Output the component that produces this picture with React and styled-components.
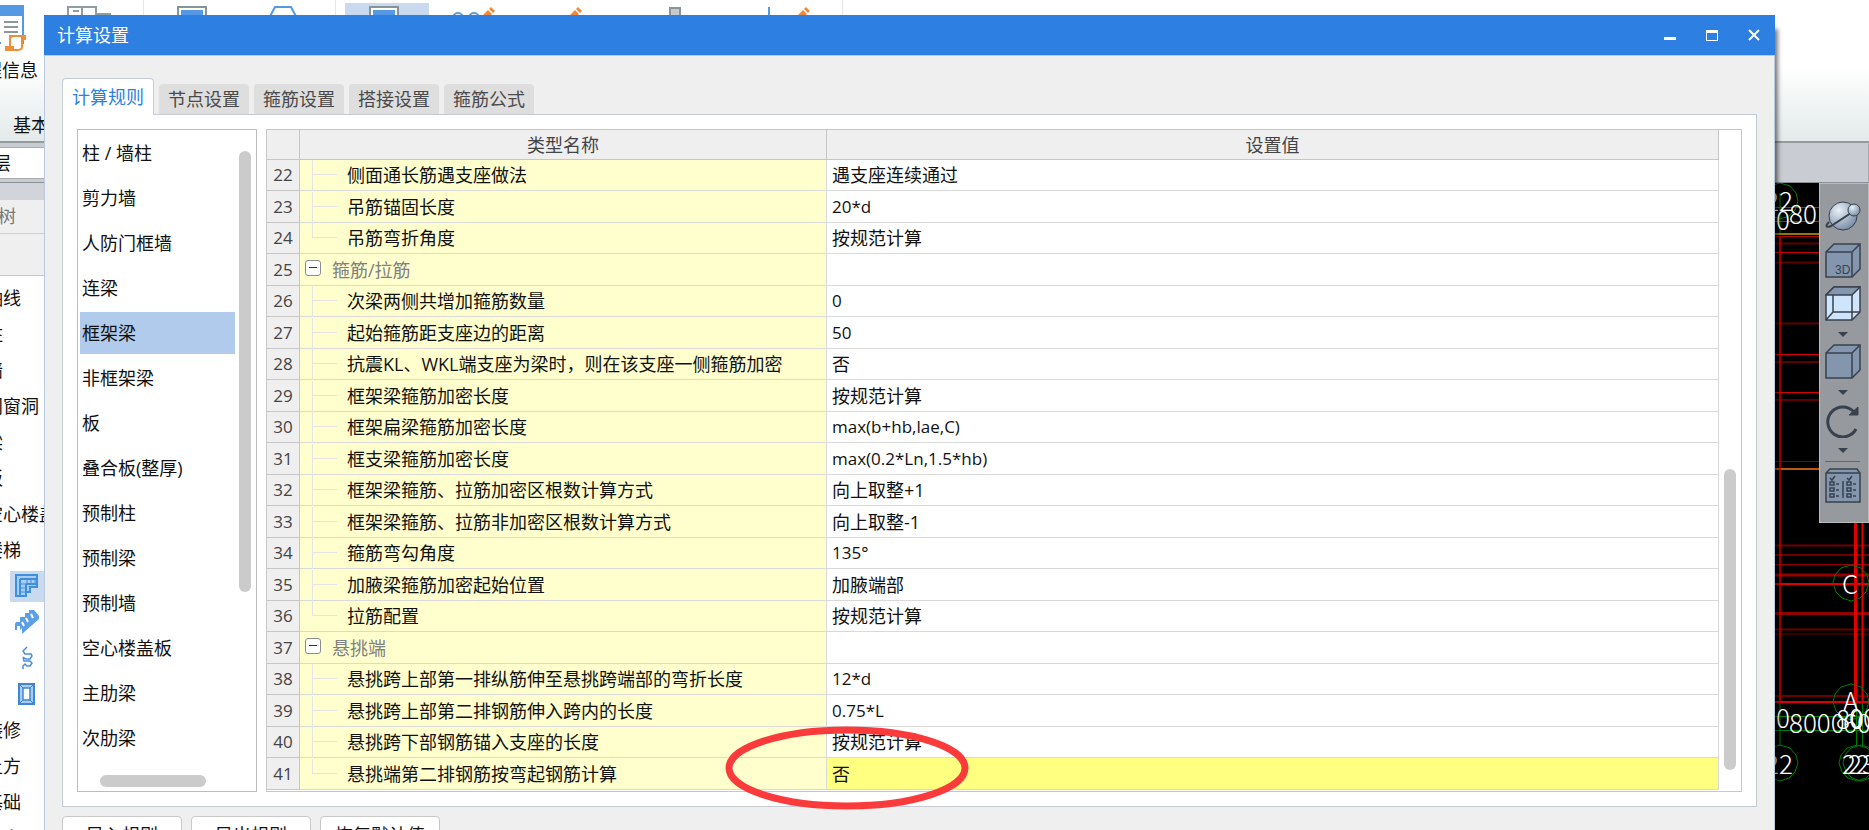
import React from 'react';
import styled, { createGlobalStyle, css } from 'styled-components';

const Global = createGlobalStyle`
  * { box-sizing: border-box; }
  body { margin: 0; overflow: hidden; }
  body, button, input {
    font-family: "Open Sans", "Noto Sans CJK SC", sans-serif;
    font-size: 18px;
    line-height: 24px;
    color: #111;
  }
`;

/* ---------- application behind the dialog ---------- */

const Desktop = styled.div`
  position: relative;
  display: flex;
  flex-direction: column;
  height: 100vh;
  overflow: hidden;
  background: #fff;
`;

const Ribbon = styled.header`
  display: flex;
  flex: none;
  height: 141px;
  background: linear-gradient(#fff 66px, #e3eaea);
`;

const RibbonGroup = styled.div`
  position: relative;
  display: flex;
  flex: none;
  gap: ${(p) => p.$gap || 0}px;
  width: ${(p) => p.$width}px;
  padding: 3px 0 0 ${(p) => p.$inset || 0}px;
  border-right: 1px solid #e4e6e8;
`;

const RibbonButton = styled.button`
  display: flex;
  flex: none;
  flex-direction: column;
  width: ${(p) => p.$width}px;
  height: 80px;
  padding: 0;
  border: 0;
  background: ${(p) => (p.$active ? '#c9d9f0' : 'transparent')};
  white-space: nowrap;
  svg { display: block; overflow: visible; }
`;

const ProjectButton = styled(RibbonButton)`
  margin-left: -34px;
  gap: 7px;
  svg {
    align-self: flex-end;
    margin-right: 12px;
  }
`;

const GroupCaption = styled.span`
  position: absolute;
  left: 13px;
  top: 113px;
  white-space: nowrap;
`;

const FloorBar = styled.div`
  display: flex;
  flex: none;
  height: 42px;
  padding: 4px 0 3px;
  background: #c9ccd2;
  border-top: 2px solid #969b9c;
  border-bottom: 1px solid #8b9096;
  border-right: 1px solid #a5a8ac;
`;

const FloorInput = styled.input`
  width: 160px;
  margin-left: -30px;
  padding: 0 5px;
  border: 1px solid #a9adb1;
  border-left: 0;
  outline: 0;
`;

const Workspace = styled.div`
  display: flex;
  flex: 1;
  min-height: 0;
`;

const NavPane = styled.nav`
  flex: none;
  width: 240px;
  background: #fff;
`;

const NavStrip = styled.div`
  height: 17px;
  background: #d2d4db;
`;

const NavTitle = styled.h2`
  height: 34px;
  margin: 0;
  padding: 4px 0;
  text-indent: -38px;
  font-size: 18px;
  font-weight: 400;
  color: #777;
  background: #efefef;
  border-bottom: 1px solid #cfcfcf;
`;

const NavTools = styled.div`
  height: 42px;
  margin-bottom: 4px;
  background: #efefef;
  border-bottom: 1px solid #c4c8cc;
`;

const NavList = styled.ul`
  margin: 0;
  padding: 0;
  list-style: none;
`;

const NavItem = styled.li`
  display: flex;
  align-items: center;
  height: 36px;
  padding-left: ${(p) => (p.$icon ? 10 : 0)}px;
  margin-left: ${(p) => (p.$icon ? 0 : -15)}px;
`;

const NavIcon = styled.span`
  display: flex;
  align-items: center;
  width: 120px;
  height: 31px;
  padding-left: 3px;
  background: ${(p) => (p.$active ? '#c9d9f0' : 'transparent')};
`;

const Canvas = styled.main`
  position: relative;
  display: flex;
  flex: 1;
  justify-content: flex-end;
  align-items: flex-start;
  background: #000;
`;

const Drawing = styled.svg`
  flex: none;
  text {
    font-family: "Noto Sans CJK SC", sans-serif;
    font-weight: 300;
    fill: #fff;
  }
`;

const ViewTools = styled.div`
  position: absolute;
  top: 0;
  right: 0;
  display: flex;
  flex-direction: column;
  align-items: center;
  width: 50px;
  height: 340px;
  padding: 16px 3px 0 0;
  background: #96999d;
  border: 1px solid #b9bbbe;
`;

const ToolButton = styled.button`
  display: flex;
  justify-content: center;
  flex: none;
  width: 40px;
  height: ${(p) => p.$height}px;
  padding: 0;
  border: 0;
  background: none;
  svg { display: block; }
`;

const ToolRule = styled.hr`
  flex: none;
  width: 35px;
  height: 1px;
  margin: 3px 0 6px;
  border: 0;
  background: #6a6664;
`;

/* ---------- dialog ---------- */

const Dialog = styled.section`
  position: absolute;
  top: 15px;
  left: 44px;
  right: 94px;
  background: #efefef;
  box-shadow: 5px 12px 4px -2px rgba(0, 0, 0, 0.5);
`;

const TitleBar = styled.div`
  display: flex;
  align-items: center;
  justify-content: space-between;
  height: 40px;
  padding: 0 15px 0 13px;
  background: #2d7fe2;
`;

const Title = styled.h1`
  margin: 0;
  font-size: 18px;
  font-weight: 400;
  color: #fff;
`;

const WindowButtons = styled.div`
  display: flex;
  gap: 30px;
`;

const WindowButton = styled.button`
  width: 12px;
  height: 12px;
  padding: 0;
  border: 0;
  background: none;
  svg { display: block; }
`;

const Body = styled.div`
  padding: 22px 17px 40px;
  border: 1px solid #b9cade;
`;

const Tabs = styled.div`
  display: flex;
  align-items: flex-end;
  gap: 5px;
  height: 36px;
`;

const Tab = styled.button`
  flex: none;
  width: 90px;
  height: 30px;
  padding: 0;
  border: 0;
  border-radius: 4px 4px 0 0;
  color: #4a4a4a;
  background: #dedede;
  ${(p) =>
    p.$active &&
    css`
      position: relative;
      width: 92px;
      height: 37px;
      margin-bottom: -1px;
      border: 1px solid #c5cbd2;
      border-bottom: 0;
      color: #2d7fe2;
      background: #fff;
    `}
`;

const Panel = styled.div`
  display: flex;
  gap: 9px;
  height: 693px;
  padding: 14px;
  background: #fff;
  border: 1px solid #c5cbd2;
`;

const Categories = styled.div`
  position: relative;
  flex: none;
  width: 180px;
  padding: 2px;
  border: 1px solid #bcbcbc;
`;

const CategoryList = styled.ul`
  display: flex;
  flex-direction: column;
  gap: 3px;
  margin: 0;
  padding: 0;
  list-style: none;
`;

const Category = styled.li`
  width: 155px;
  height: 42px;
`;

const CategoryButton = styled.button`
  width: 100%;
  height: 100%;
  padding: 0 2px;
  border: 0;
  text-align: left;
  background: ${(p) => (p.$active ? '#b1cbed' : 'transparent')};
`;

const Thumb = styled.div`
  position: absolute;
  border-radius: 6px;
  background: #cbcbcb;
`;

const CategoryThumbY = styled(Thumb)`
  top: 21px;
  right: 5px;
  width: 12px;
  height: 441px;
`;

const CategoryThumbX = styled(Thumb)`
  bottom: 4px;
  left: 22px;
  width: 106px;
  height: 12px;
`;

const GridFrame = styled.div`
  position: relative;
  flex: 1;
  min-width: 0;
  padding-right: 22px;
  border: 1px solid #c6c6c6;
`;

const GridThumb = styled(Thumb)`
  top: 339px;
  right: 5px;
  width: 12px;
  height: 301px;
`;

const Grid = styled.table`
  width: 100%;
  table-layout: fixed;
  border-collapse: separate;
  border-spacing: 0;
`;

const HeadRow = styled.tr`
  height: 30px;
`;

const HeadCell = styled.th`
  width: ${(p) => (p.$width ? `${p.$width}px` : 'auto')};
  padding: 0;
  font-weight: 400;
  color: #444;
  background: #efefef;
  border-right: 1px solid #c6c6c6;
  border-bottom: 1px solid #c6c6c6;
`;

const Row = styled.tr`
  height: 31px;
  &:nth-child(even) { height: 32px; }
`;

const NumberCell = styled.th`
  padding: 0;
  font-size: 17px;
  font-weight: 400;
  color: #444;
  background: #efefef;
  border-right: 1px solid #c6c6c6;
  border-bottom: 1px solid #c6c6c6;
`;

const NameCell = styled.td`
  height: inherit;
  padding: 0;
  background: #ffffce;
  border-right: 1px solid #d9d9d9;
  border-bottom: 1px solid #d9d9d9;
`;

const NameLine = styled.div`
  display: flex;
  align-items: center;
  height: 30px;
  gap: ${(p) => (p.$group ? 11 : 10)}px;
  padding-left: ${(p) => (p.$group ? 5 : 12)}px;
  color: ${(p) => (p.$group ? '#808080' : '#111')};
  white-space: nowrap;
`;

const Branch = styled.span`
  flex: none;
  align-self: stretch;
  width: 25px;
  margin-bottom: ${(p) => (p.$last ? 0 : -1)}px;
  background:
    linear-gradient(#e4e4e4, #e4e4e4) 0 14px / 25px 1px no-repeat,
    linear-gradient(#e4e4e4, #e4e4e4) 0 0 / 1px ${(p) => (p.$last ? '14px' : '100%')} no-repeat;
`;

const Expander = styled.button`
  display: flex;
  align-items: center;
  justify-content: center;
  flex: none;
  width: 16px;
  height: 16px;
  margin-bottom: 4px;
  padding: 0;
  border: 1px solid #8c8c8c;
  border-radius: 3px;
  background: #fff;
  &::before {
    content: "";
    width: 8px;
    height: 1px;
    background: #333;
  }
`;

const ValueCell = styled.td`
  padding: 0 5px;
  font-size: ${(p) => (p.$latin ? 17 : 18)}px;
  background: ${(p) => (p.$active ? '#ffff80' : '#fff')};
  border-right: 1px solid #d9d9d9;
  border-bottom: 1px solid #d9d9d9;
`;

const Actions = styled.footer`
  display: flex;
  gap: 9px;
  padding-top: 9px;
`;

const ActionButton = styled.button`
  width: 120px;
  height: 38px;
  padding: 0;
  border: 1px solid #c9c9c9;
  border-radius: 4px;
  background: #fff;
`;

const Marker = styled.svg`
  position: absolute;
  left: 725px;
  top: 725px;
  pointer-events: none;
`;

/* ---------- icons ---------- */

const ProjectIcon = () => (
  <svg width="47" height="48" viewBox="0 0 47 48" fill="none">
    <path d="M0 3H44V40H0Z" fill="#fff" stroke="#5598e4" strokeWidth="2" />
    <path d="M0 3H45V13H0Z" fill="#5598e4" />
    <path d="M25 19H39M25 24H39M25 29H39M25 34H29" stroke="#8c979b" strokeWidth="2" />
    <path d="M22 39V31H42V46H22Z" fill="#fff" />
    <path d="M30 33h13c3 0 3 4 0 4v7c0 2-2 3-5 3H27v-3h4V36c0-2 1-3 3-3" fill="#fff" stroke="#ec8f38" strokeWidth="2" />
    <path d="M26 43h9v5h-9ZM42 32h5v5h-5Z" fill="#ec8f38" />
  </svg>
);
const SheetIcon = () => (
  <svg width="44" height="40" viewBox="0 0 44 40" fill="none" stroke="#8e9da0" strokeWidth="2">
    <path d="M1 40V4H29V40M29 11H43V40M6 8H12M15 4V40" />
  </svg>
);
const Monitor = () => (
  <g>
    <rect x="1" y="4" width="28" height="25" fill="#fff" stroke="#84959a" strokeWidth="2" />
    <rect x="4" y="7" width="22" height="19" fill="#5598e4" />
  </g>
);
const MonitorIcon = () => (
  <svg width="30" height="30" viewBox="0 0 30 30"><Monitor /></svg>
);
const SettingsIcon = () => (
  <svg width="84" height="30" viewBox="-24 0 84 30"><Monitor /></svg>
);
const HexIcon = () => (
  <svg width="32" height="32" viewBox="0 0 32 32" fill="none" stroke="#5598e4" strokeWidth="2">
    <path d="M8 4H24L31 17L24 30H8L1 17Z" />
  </svg>
);
const Pencil = ({ x }) => (
  <path d={`M${x} 14l7-7 4 4-7 7ZM${x + 8} 6l2-2 4 4-2 2Z`} fill="#f0883a" />
);
const EyesIcon = () => (
  <svg width="84" height="30" viewBox="0 0 84 30">
    <g fill="none" stroke="#5598e4" strokeWidth="2">
      <circle cx="19" cy="15" r="5" />
      <circle cx="35" cy="15" r="5" />
    </g>
    <Pencil x={42} />
  </svg>
);
const EditIcon = () => (
  <svg width="84" height="30" viewBox="0 0 84 30"><Pencil x={35} /></svg>
);
const ColumnIcon = () => (
  <svg width="84" height="30" viewBox="0 0 84 30">
    <rect x="43" y="5" width="10" height="24" fill="#c5cacc" stroke="#87969b" strokeWidth="2" />
  </svg>
);
const AxisIcon = () => (
  <svg width="84" height="30" viewBox="0 0 84 30">
    <path d="M48 4V30" stroke="#5598e4" strokeWidth="2" />
    <Pencil x={75} />
  </svg>
);

const StraightStairIcon = () => (
  <svg width="26" height="24" viewBox="0 0 26 24" fill="none" stroke="#3f8fdf" strokeWidth="2">
    <path d="M3 1H24V13H17V18H13V22H3Z" fill="#a9cdf4" />
    <path d="M7 5V22M7 5H24M13 10V18M13 10H24" />
    <path d="M14 5V10M18 5V10M22 5V10M7 10H13M7 14H13M7 18H13" strokeWidth="1" />
  </svg>
);
const StairIcon = () => (
  <svg width="26" height="26" viewBox="0 0 26 26">
    <path d="M2 15l1-2h4v-5h5V4h4V1h5l5 6v3L9 25v-6l-2 2v-4H4v4H2Z" fill="#5a9fe8" />
    <path d="M9 13l2 4M13 9l2 4M18 5l2 4" stroke="#fff" strokeWidth="2" />
  </svg>
);
const SpiralIcon = () => (
  <svg width="26" height="26" viewBox="0 0 26 26" fill="none" stroke="#4a8fdc" strokeWidth="1.5">
    <path d="M14 2l-4 4 2 3h6l1 2-2 3h-4l-3-2M10 12l1 4h6l2 2-2 3h-3l-2-2-2 2v3" />
  </svg>
);
const WellIcon = () => (
  <svg width="26" height="24" viewBox="0 0 26 24" fill="none" stroke="#3f86d8">
    <rect x="6" y="2" width="15" height="20" fill="#a9cdf4" strokeWidth="2" />
    <rect x="10" y="6" width="7" height="12" fill="#fff" strokeWidth="1.5" />
    <path d="M6 2l4 4M21 2l-4 4M6 22l4-4M21 22l-4-4" />
  </svg>
);

const OrbitIcon = () => (
  <svg width="36" height="32" viewBox="0 0 36 32">
    <defs>
      <radialGradient id="ball" cx="0.35" cy="0.3" r="0.8">
        <stop offset="0" stopColor="#e8f1fa" />
        <stop offset="1" stopColor="#71849c" />
      </radialGradient>
    </defs>
    <g stroke="#38414e" fill="url(#ball)">
      <circle cx="18" cy="16" r="14" />
      <path d="M4 22c-4 4-3 6 2 4L26 13" fill="none" strokeWidth="2" />
      <circle cx="29" cy="10" r="6" />
    </g>
  </svg>
);
const CubeIcon = ({ label }) => (
  <svg width="36" height="35" viewBox="0 0 36 35" fill="#8496ad" stroke="#38414e" strokeWidth="1.5">
    <path d="M1 9L9 1H35V26L27 34H1Z" />
    <path d="M1 9H27V34M27 9L35 1" fill="none" />
    {label && (
      <text x="10" y="31" fontFamily="Liberation Sans" fontSize="12" fill="#38414e" stroke="none">{label}</text>
    )}
  </svg>
);
const WireCubeIcon = () => (
  <svg width="36" height="35" viewBox="0 0 36 35" stroke="#38414e" strokeWidth="1.5">
    <path d="M1 9L9 1H35V26L27 34H1Z" fill="#cfe5fc" />
    <path d="M1 9L9 1H35L27 9Z" fill="#8496ad" />
    <path d="M27 9V34M8 9V26H35M8 26L1 34" fill="none" />
  </svg>
);
const CaretIcon = () => (
  <svg width="10" height="5" viewBox="0 0 10 5"><path d="M0 0H10L5 5Z" fill="#38414e" /></svg>
);
const RotateIcon = () => (
  <svg width="36" height="34" viewBox="0 0 36 34" fill="none" stroke="#38414e" strokeWidth="3">
    <path d="M31 25A15 15 0 1 1 29 8" />
    <path d="M33 3V11H24Z" fill="#38414e" strokeWidth="1" />
  </svg>
);
const ChecklistIcon = () => (
  <svg width="36" height="35" viewBox="0 0 36 35" fill="#8496ad" stroke="#38414e" strokeWidth="1.5">
    <path d="M1 5L5 1H32L35 5V34H1Z" />
    <path d="M1 5H35M5 10l2 2 3-4M22 10l2 2 3-4M5 14h4v3h-4ZM5 20h4v3h-4ZM5 26h4v3h-4ZM22 14h4v3h-4ZM22 20h4v3h-4ZM22 26h4v3h-4ZM11 16h3M11 22h3M11 28h3M28 16h3M28 22h3M28 28h3M18 13V30" fill="none" />
  </svg>
);

const HLine = ({ y, c, w = 1 }) => <path d={`M0 ${y}H94`} stroke={c} strokeWidth={w} />;
const Bubble = ({ x, y }) => (
  <polygon
    points="0,-18 10,-15 16,-8 18,0 15,9 9,15 0,18 -9,15 -15,9 -18,0 -16,-8 -10,-15"
    transform={`translate(${x} ${y})`}
    fill="none"
    stroke="#007c00"
  />
);

const PlanDrawing = () => (
  <Drawing width="94" height="647" viewBox="0 0 94 647" fontSize="26">
    <path d="M5 10V52M0 38.500H94" stroke="#007c00" />
    <HLine y={24.5} c="#007c00" />
    <HLine y={51} c="#8a7a10" w={2} />
    <HLine y={53.5} c="#b00000" />
    <HLine y={60.5} c="#5c0000" w={2} />
    <HLine y={69.5} c="#c80000" />
    <HLine y={79.5} c="#5c0000" w={2} />
    <HLine y={140.5} c="#5c0000" w={2} />
    <HLine y={171.5} c="#d80000" />
    <HLine y={179} c="#5c0000" w={2} />
    <HLine y={209.5} c="#d80000" />
    <HLine y={217} c="#5c0000" w={2} />
    <HLine y={278.5} c="#800000" />
    <HLine y={286} c="#b85a10" w={2} />
    <HLine y={362.5} c="#700000" w={2} />
    <HLine y={372} c="#700000" w={2} />
    <HLine y={381.5} c="#980000" />
    <HLine y={392} c="#980000" w={3} />
    <HLine y={401} c="#e00000" w={2} />
    <HLine y={430.5} c="#900000" w={3} />
    <HLine y={446.5} c="#6a0000" w={2} />
    <HLine y={451} c="#6a0000" />
    <HLine y={513} c="#6a0000" w={2} />
    <HLine y={519} c="#e00000" w={2} />
    <path d="M5 53V520" stroke="#d80000" strokeWidth="1.5" />
    <path d="M80.500 340V520" stroke="#e00000" strokeWidth="3" />
    <path d="M87.500 340V520" stroke="#e00000" strokeWidth="2" />
    <path d="M5 520V563M0 533.500H94M0 547.500H94M81.500 520V563M87.500 520V563" stroke="#007c00" />
    <Bubble x={5} y={18} />
    <Bubble x={76} y={400} />
    <Bubble x={76} y={519} />
    <Bubble x={5} y={580} />
    <Bubble x={82} y={580} />
    <Bubble x={86} y={580} />
    <text x="-10" y="28">22</text>
    <text x="1" y="47">0</text>
    <text x="14" y="41">80</text>
    <text x="67" y="411">C</text>
    <text x="68" y="528">A</text>
    <text x="1" y="545">0</text>
    <text x="14" y="550">8000</text>
    <text x="61" y="546">80</text>
    <text x="68" y="550">60</text>
    <text x="74" y="545">00</text>
    <text x="-10" y="591">22</text>
    <text x="67" y="591">22</text>
    <text x="73" y="591">23</text>
  </Drawing>
);

/* ---------- data ---------- */

const tabs = ['计算规则', '节点设置', '箍筋设置', '搭接设置', '箍筋公式'];

const categories = [
  '柱 / 墙柱', '剪力墙', '人防门框墙', '连梁', '框架梁', '非框架梁', '板',
  '叠合板(整厚)', '预制柱', '预制梁', '预制墙', '空心楼盖板', '主肋梁', '次肋梁',
];

const rows = [
  { n: 22, name: '侧面通长筋遇支座做法', value: '遇支座连续通过' },
  { n: 23, name: '吊筋锚固长度', value: '20*d', latin: true },
  { n: 24, name: '吊筋弯折角度', value: '按规范计算', last: true },
  { n: 25, name: '箍筋/拉筋', value: '', group: true },
  { n: 26, name: '次梁两侧共增加箍筋数量', value: '0', latin: true },
  { n: 27, name: '起始箍筋距支座边的距离', value: '50', latin: true },
  { n: 28, name: '抗震KL、WKL端支座为梁时，则在该支座一侧箍筋加密', value: '否' },
  { n: 29, name: '框架梁箍筋加密长度', value: '按规范计算' },
  { n: 30, name: '框架扁梁箍筋加密长度', value: 'max(b+hb,lae,C)', latin: true },
  { n: 31, name: '框支梁箍筋加密长度', value: 'max(0.2*Ln,1.5*hb)', latin: true },
  { n: 32, name: '框架梁箍筋、拉筋加密区根数计算方式', value: '向上取整+1' },
  { n: 33, name: '框架梁箍筋、拉筋非加密区根数计算方式', value: '向上取整-1' },
  { n: 34, name: '箍筋弯勾角度', value: '135°', latin: true },
  { n: 35, name: '加腋梁箍筋加密起始位置', value: '加腋端部' },
  { n: 36, name: '拉筋配置', value: '按规范计算', last: true },
  { n: 37, name: '悬挑端', value: '', group: true },
  { n: 38, name: '悬挑跨上部第一排纵筋伸至悬挑跨端部的弯折长度', value: '12*d', latin: true },
  { n: 39, name: '悬挑跨上部第二排钢筋伸入跨内的长度', value: '0.75*L', latin: true },
  { n: 40, name: '悬挑跨下部钢筋锚入支座的长度', value: '按规范计算' },
  { n: 41, name: '悬挑端第二排钢筋按弯起钢筋计算', value: '否', last: true, active: true },
];

const navItems = [
  { text: '轴线' }, { text: '柱' }, { text: '墙' }, { text: '门窗洞' }, { text: '梁' },
  { text: '板' }, { text: '空心楼盖' }, { text: '楼梯' },
  { label: '直形梯段', icon: StraightStairIcon, active: true },
  { label: '楼梯', icon: StairIcon },
  { label: '螺旋梯段', icon: SpiralIcon },
  { label: '楼梯井', icon: WellIcon },
  { text: '装修' }, { text: '土方' }, { text: '基础' }, { text: '其它' },
];

/* ---------- page ---------- */

function AppBackground() {
  return (
    <>
      <Ribbon>
        <RibbonGroup $width={144} $gap={29}>
          <ProjectButton $width={72}><ProjectIcon />工程信息</ProjectButton>
          <RibbonButton $width={44} aria-label="图纸"><SheetIcon /></RibbonButton>
          <GroupCaption>基本设置</GroupCaption>
        </RibbonGroup>
        <RibbonGroup $width={192} $gap={60} $inset={33}>
          <RibbonButton $width={30} aria-label="查看"><MonitorIcon /></RibbonButton>
          <RibbonButton $width={32} aria-label="比重"><HexIcon /></RibbonButton>
        </RibbonGroup>
        <RibbonGroup $width={507} $gap={10} $inset={9}>
          <RibbonButton $width={84} $active aria-label="计算设置"><SettingsIcon /></RibbonButton>
          <RibbonButton $width={84} aria-label="查看编辑"><EyesIcon /></RibbonButton>
          <RibbonButton $width={84} aria-label="编辑"><EditIcon /></RibbonButton>
          <RibbonButton $width={84} aria-label="构件"><ColumnIcon /></RibbonButton>
          <RibbonButton $width={84} aria-label="轴网"><AxisIcon /></RibbonButton>
        </RibbonGroup>
      </Ribbon>
      <FloorBar>
        <FloorInput aria-label="楼层" defaultValue="首层" />
      </FloorBar>
      <Workspace>
        <NavPane>
          <NavStrip />
          <NavTitle>导航树</NavTitle>
          <NavTools />
          <NavList>
            {navItems.map((item, i) => (
              <NavItem key={i} $icon={!!item.icon}>
                {item.icon ? (
                  <NavIcon $active={item.active} role="img" aria-label={item.label}><item.icon /></NavIcon>
                ) : (
                  item.text
                )}
              </NavItem>
            ))}
          </NavList>
        </NavPane>
        <Canvas>
          <PlanDrawing />
          <ViewTools>
            <ToolButton $height={43} aria-label="动态观察"><OrbitIcon /></ToolButton>
            <ToolButton $height={43} aria-label="三维"><CubeIcon label="3D" /></ToolButton>
            <ToolButton $height={46} aria-label="线框"><WireCubeIcon /></ToolButton>
            <ToolButton $height={12} aria-label="线框选项"><CaretIcon /></ToolButton>
            <ToolButton $height={46} aria-label="实体"><CubeIcon /></ToolButton>
            <ToolButton $height={14} aria-label="实体选项"><CaretIcon /></ToolButton>
            <ToolButton $height={44} aria-label="旋转"><RotateIcon /></ToolButton>
            <ToolButton $height={10} aria-label="旋转选项"><CaretIcon /></ToolButton>
            <ToolRule />
            <ToolButton $height={36} aria-label="显示设置"><ChecklistIcon /></ToolButton>
          </ViewTools>
        </Canvas>
      </Workspace>
    </>
  );
}

function SettingsGrid() {
  return (
    <GridFrame>
      <Grid>
        <thead>
          <HeadRow>
            <HeadCell $width={33} aria-label="序号" />
            <HeadCell $width={527}>类型名称</HeadCell>
            <HeadCell>设置值</HeadCell>
          </HeadRow>
        </thead>
        <tbody>
          {rows.map((r) => (
            <Row key={r.n}>
              <NumberCell scope="row">{r.n}</NumberCell>
              <NameCell>
                <NameLine $group={r.group}>
                  {r.group ? <Expander aria-label="折叠" /> : <Branch $last={r.last} />}
                  {r.name}
                </NameLine>
              </NameCell>
              <ValueCell $latin={r.latin} $active={r.active}>{r.value}</ValueCell>
            </Row>
          ))}
        </tbody>
      </Grid>
      <GridThumb />
    </GridFrame>
  );
}

export default function App() {
  return (
    <Desktop>
      <Global />
      <AppBackground />
      <Dialog role="dialog" aria-labelledby="dialog-title">
        <TitleBar>
          <Title id="dialog-title">计算设置</Title>
          <WindowButtons>
            <WindowButton aria-label="最小化">
              <svg width="12" height="12" viewBox="0 0 12 12"><path d="M0 8H12V11H0Z" fill="#fff" /></svg>
            </WindowButton>
            <WindowButton aria-label="最大化">
              <svg width="12" height="12" viewBox="0 0 12 12"><path d="M0 1H12V12H0ZM1 4V11H11V4Z" fill="#fff" fillRule="evenodd" /></svg>
            </WindowButton>
            <WindowButton aria-label="关闭">
              <svg width="12" height="12" viewBox="0 0 12 12"><path d="M1 1L11 11M11 1L1 11" stroke="#fff" strokeWidth="2" /></svg>
            </WindowButton>
          </WindowButtons>
        </TitleBar>
        <Body>
          <Tabs role="tablist">
            {tabs.map((t, i) => (
              <Tab key={t} role="tab" aria-selected={i === 0} $active={i === 0}>{t}</Tab>
            ))}
          </Tabs>
          <Panel>
            <Categories>
              <CategoryList>
                {categories.map((c) => (
                  <Category key={c}>
                    <CategoryButton $active={c === '框架梁'}>{c}</CategoryButton>
                  </Category>
                ))}
              </CategoryList>
              <CategoryThumbY />
              <CategoryThumbX />
            </Categories>
            <SettingsGrid />
          </Panel>
          <Actions>
            <ActionButton>导入规则</ActionButton>
            <ActionButton>导出规则</ActionButton>
            <ActionButton>恢复默认值</ActionButton>
          </Actions>
        </Body>
      </Dialog>
      <Marker width="244" height="86" viewBox="0 0 244 86">
        <ellipse cx="122" cy="43" rx="118" ry="38" fill="none" stroke="#fb3b3b" strokeWidth="7" />
      </Marker>
    </Desktop>
  );
}
